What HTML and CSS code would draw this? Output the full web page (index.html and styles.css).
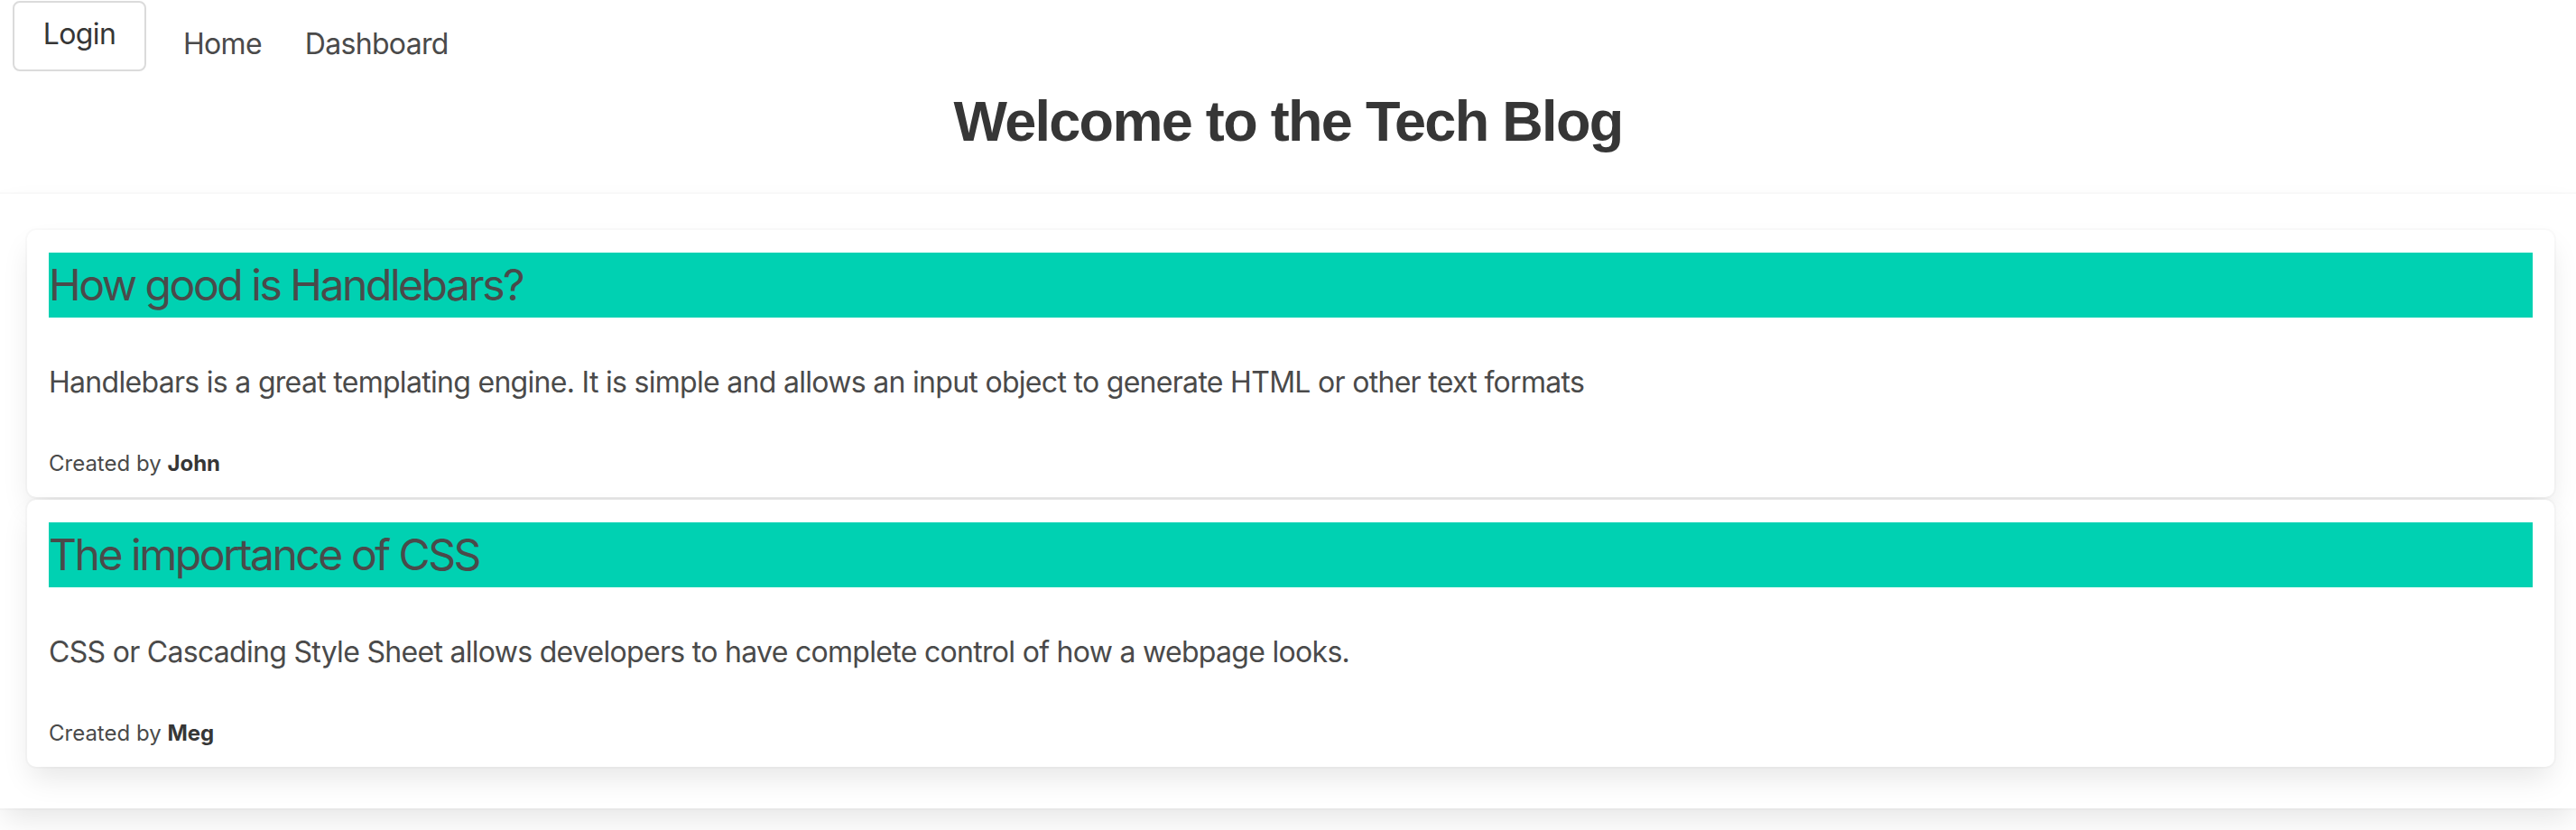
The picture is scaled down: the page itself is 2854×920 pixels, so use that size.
FILE: index.html
```html
<!DOCTYPE html>
<html lang="en">
<head>
<meta charset="utf-8">
<title>Tech Blog</title>
<link rel="stylesheet" href="styles.css">
</head>
<body>
<header class="site-header">
  <nav class="navbar">
    <button class="btn-login">Login</button>
    <a class="nav-item" href="#">Home</a>
    <a class="nav-item" href="#">Dashboard</a>
  </nav>
  <h1 class="page-title">Welcome to the Tech Blog</h1>
</header>
<main class="posts">
  <article class="card">
    <h2 class="card-title">How good is Handlebars?</h2>
    <p class="card-body">Handlebars is a great templating engine. It is simple and allows an input object to generate HTML or other text formats</p>
    <p class="card-meta">Created by <strong>John</strong></p>
  </article>
  <article class="card">
    <h2 class="card-title">The importance of CSS</h2>
    <p class="card-body">CSS or Cascading Style Sheet allows developers to have complete control of how a webpage looks.</p>
    <p class="card-meta">Created by <strong>Meg</strong></p>
  </article>
</main>
</body>
</html>
```

FILE: styles.css
```css
html, body {
  margin: 0;
  padding: 0;
  background: #ffffff;
}

body {
  font-family: Inter, "Noto Sans", sans-serif;
  color: #4a4a4a;
  width: 2854px;
  height: 920px;
  overflow: hidden;
}

.site-header {
  padding-bottom: 45px;
}

.navbar {
  display: flex;
  align-items: flex-start;
  height: 98px;
  padding-left: 14px;
}

.btn-login {
  margin-top: 1px;
  width: 148px;
  height: 78px;
  border: 2px solid #dbdbdb;
  border-radius: 8px;
  background: #ffffff;
  font-family: Inter, "Noto Sans", sans-serif;
  font-size: 32px;
  letter-spacing: -0.6px;
  color: #363636;
  padding: 0 0 6px 0;
  margin-right: 17px;
}

.nav-item {
  font-size: 32px;
  line-height: 48px;
  letter-spacing: -0.7px;
  padding: 25px 24px 0 24px;
  color: #4a4a4a;
  text-decoration: none;
}

.page-title {
  margin: 0;
  text-align: center;
  font-family: "Liberation Sans", Arial, sans-serif;
  font-weight: 700;
  font-size: 63px;
  letter-spacing: -1.7px;
  line-height: 72px;
  color: #363636;
}

.posts {
  height: 681px;
  box-sizing: border-box;
  padding: 40px 24px 40px 30px;
  display: flex;
  flex-direction: column;
  gap: 3px;
  background: #ffffff;
  box-shadow: 0 16px 32px -4px rgba(10, 10, 10, 0.1), 0 0 0 2px rgba(10, 10, 10, 0.02);
}

.card {
  background: #ffffff;
  border-radius: 10px;
  padding: 25px 24px 19px 24px;
  box-shadow: 0 16px 32px -4px rgba(10, 10, 10, 0.1), 0 0 0 2px rgba(10, 10, 10, 0.02);
}

.card-title {
  margin: 0;
  background: #00d1b2;
  font-size: 48px;
  line-height: 72px;
  font-weight: 400;
  letter-spacing: -2.45px;
  color: #4a4a4a;
}

.card-body {
  margin: 48px 0 0 0;
  font-size: 32px;
  line-height: 48px;
  letter-spacing: -0.7px;
}

.card-meta {
  margin: 48px 0 0 0;
  font-size: 24px;
  line-height: 36px;
}

.card-meta strong {
  font-weight: 700;
  color: #363636;
}
```
